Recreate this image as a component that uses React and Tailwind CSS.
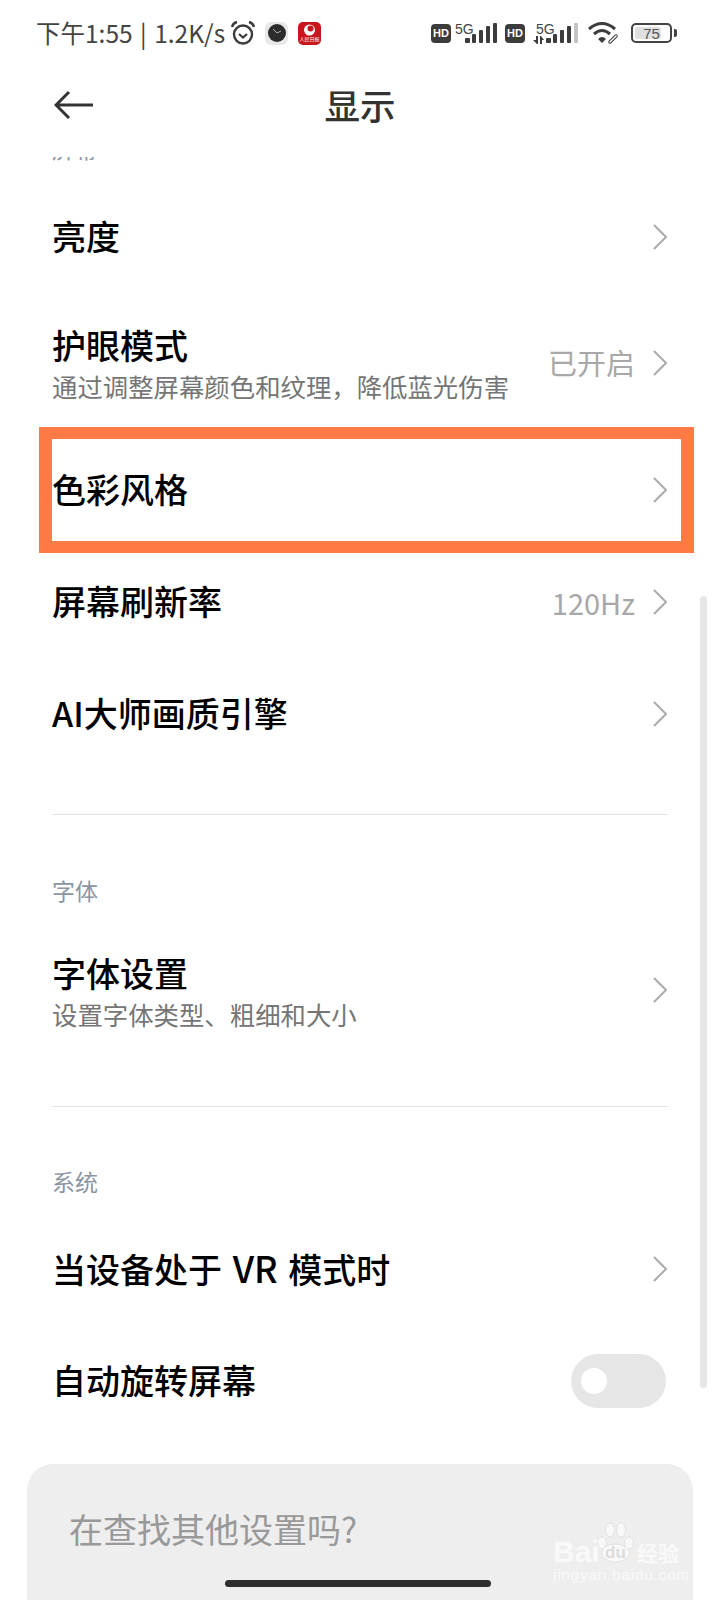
import React from "react";

const CJK = '"Noto Sans CJK SC", sans-serif';

const Chevron = () => (
  <svg width="16" height="28" viewBox="0 0 16 28" fill="none" className="shrink-0">
    <path d="M2 2 L14 14 L2 26" stroke="#ababab" strokeWidth="2" strokeLinejoin="round" />
  </svg>
);

const Bars = ({ lastLight }) => (
  <svg width="32" height="21" viewBox="0 0 32 21" fill="#3c3c3c">
    <rect x="0" y="15" width="5" height="5" rx="1" />
    <rect x="7" y="11" width="4" height="9" rx="1" />
    <rect x="14" y="7" width="4" height="13" rx="1" />
    <rect x="21" y="3" width="4" height="17" rx="1" />
    <rect x="28" y="0" width="4" height="20" rx="1" fill={lastLight ? "#c4c4c4" : "#3c3c3c"} />
  </svg>
);

const HdBadge = () => (
  <div className="w-[20px] h-[19px] rounded-[4px] bg-[#3c3c3c] flex items-center justify-center text-white text-[11px] font-bold leading-none font-['Liberation_Sans']">
    HD
  </div>
);

const StatusBar = () => (
  <div className="h-[66px] flex items-center pl-[36px] pr-[43px] text-[#444444]">
    <span className="text-[24.5px] leading-none whitespace-nowrap [word-spacing:2px]">下午1:55 | 1.2K/s</span>
    {/* alarm */}
    <svg width="26" height="26" viewBox="0 0 26 26" fill="none" stroke="#3c3c3c" className="ml-[5px]">
      <circle cx="13" cy="14.5" r="9" strokeWidth="2.4" />
      <path d="M9 14 L13 17.5 L17 14" strokeWidth="2.2" />
      <path d="M2 7 Q3 3 7 2" strokeWidth="2.4" />
      <path d="M24 7 Q23 3 19 2" strokeWidth="2.4" />
    </svg>
    {/* clock app */}
    <div className="ml-[9px] w-[23px] h-[23px] rounded-[6px] bg-[#e8e8e8] flex items-center justify-center">
      <svg width="18" height="18" viewBox="0 0 18 18">
        <circle cx="9" cy="9" r="9" fill="#2c2c2c" />
        <path d="M9 9 L5 5 M9 9 L13 7" stroke="#cfcfcf" strokeWidth="0.8" />
      </svg>
    </div>
    {/* news app */}
    <div className="ml-[10px] w-[23px] h-[23px] rounded-[5px] bg-[#c8161d] flex flex-col items-center justify-center overflow-hidden">
      <svg width="13" height="12" viewBox="0 0 13 12">
        <circle cx="6.5" cy="6" r="5.5" fill="#ffffff" />
        <circle cx="7.5" cy="4.5" r="3" fill="#c8161d" />
      </svg>
      <span className="text-[5px] leading-[6px] text-white whitespace-nowrap">人民日报</span>
    </div>

    <div className="ml-auto flex items-center">
      <HdBadge />
      <div className="relative w-[42px] h-[21px] ml-[4px]">
        <span className="absolute left-0 -top-[1px] text-[14px] leading-none font-['Liberation_Sans']">5G</span>
        <div className="absolute left-[10px] top-0">
          <Bars />
        </div>
      </div>
      <div className="ml-[8px]">
        <HdBadge />
      </div>
      <div className="relative w-[45px] h-[21px] ml-[8px]">
        <span className="absolute left-[3px] -top-[1px] text-[14px] leading-none font-['Liberation_Sans']">5G</span>
        <svg width="11" height="8" viewBox="0 0 11 8" className="absolute left-0 top-[13px]" fill="#3c3c3c">
          <path d="M3 0 L5 0 L5 8 L4 8 L0 4 L3 4 Z" />
          <path d="M7 0 L8 0 L11 4 L9 4 L9 8 L7 8 Z" />
        </svg>
        <div className="absolute left-[13px] top-0">
          <Bars lastLight />
        </div>
      </div>
      {/* wifi */}
      <svg width="34" height="24" viewBox="0 0 34 24" fill="none" className="ml-[9px]">
        <path d="M2 8 Q15 -3 28 8" stroke="#3c3c3c" strokeWidth="3" />
        <path d="M7 13 Q15 6 23 13" stroke="#3c3c3c" strokeWidth="3" />
        <path d="M11 18 L15 22 L19 18 Q15 14 11 18 Z" fill="#3c3c3c" />
        <path d="M23 21 L29 15" stroke="#3c3c3c" strokeWidth="3.5" strokeLinecap="round" />
        <path d="M23 21 L29 15" stroke="#ffffff" strokeWidth="1.5" strokeLinecap="round" />
      </svg>
      {/* battery */}
      <div className="ml-[10px] relative w-[41px] h-[20px] rounded-[5px] border-2 border-[#444444] flex items-center">
        <div className="absolute left-[2px] top-[2px] bottom-[2px] w-[26px] bg-[#e0e0e0] rounded-[2px]" />
        <span className="relative w-full text-center text-[15px] leading-none font-['Liberation_Sans'] text-[#555555]">75</span>
      </div>
      <div className="ml-[2px] w-[3px] h-[8px] rounded-r-[2px] bg-[#444444]" />
    </div>
  </div>
);

const Row = ({ title, sub, value, height = "h-[112px]", rowClass = "", highlight }) => (
  <div className={`relative flex items-center justify-between pl-[52px] pr-[52px] ${height} ${rowClass}`}>
    <div className={sub ? "pt-[3px]" : "pb-[2px]"}>
      <div className="text-[34px] leading-[42px] font-medium text-black whitespace-nowrap [word-spacing:3px]">{title}</div>
      {sub && <div className="mt-[2px] text-[25.4px] leading-[36px] text-[#757575] whitespace-nowrap">{sub}</div>}
    </div>
    <div className="flex items-center gap-[17px]">
      {value && <span className="text-[29px] leading-none text-[#a8a8a8]">{value}</span>}
      <Chevron />
    </div>
    {highlight && (
      <div className="absolute left-[39px] -top-[7px] w-[655px] h-[126px] border-x-[13px] border-y-[12px] border-[#ff7a45]" />
    )}
  </div>
);

const SectionLabel = ({ children, className }) => (
  <div className={`px-[52px] text-[23px] leading-[30px] text-[#8c95a3] ${className}`}>{children}</div>
);

const Divider = ({ className }) => <div className={`mx-[52px] h-px bg-[#e3e3e3] ${className}`} />;

const App = () => (
  <div className="relative w-[720px] h-[1600px] overflow-hidden bg-white" style={{ fontFamily: CJK }}>
    <StatusBar />

    {/* header */}
    <div className="relative h-[91px] pt-[12px]">
      <svg width="40" height="30" viewBox="0 0 40 30" fill="none" className="absolute left-[54px] top-[24px]">
        <path d="M39 15 L2 15 M15 2 L2 15 L15 28" stroke="#333333" strokeWidth="3" />
      </svg>
      <div className="text-center text-[35.5px] leading-[54px] font-medium text-[#333333]">显示</div>
    </div>

    {/* list */}
    <div className="h-[7px] overflow-hidden mb-[17px]">
      <SectionLabel className="-mt-[24px]">屏幕</SectionLabel>
    </div>
    <Row title="亮度" />
    <Row title="护眼模式" sub="通过调整屏幕颜色和纹理，降低蓝光伤害" value="已开启" height="h-[141px]" rowClass="pb-[2px]" />
    <Row title="色彩风格" highlight />
    <Row title="屏幕刷新率" value="120Hz" />
    <Row title="AI大师画质引擎" />
    <Divider className="mt-[44px]" />

    <SectionLabel className="mt-[60px]">字体</SectionLabel>
    <div className="mt-[14px]">
      <Row title="字体设置" sub="设置字体类型、粗细和大小" height="h-[142px]" />
    </div>
    <Divider className="mt-[45px]" />

    <SectionLabel className="mt-[59px]">系统</SectionLabel>
    <div className="mt-[17px]">
      <Row
        title={
          <>
            当设备处于 <span className="text-[36px]">VR</span> 模式时
          </>
        }
      />
    </div>
    <div className="relative flex items-center justify-between pl-[52px] pr-[54px] h-[112px]">
      <div className="pb-[2px] text-[34px] leading-[42px] font-medium text-black">自动旋转屏幕</div>
      <div className="w-[95px] h-[54px] rounded-full bg-[#e6e6e6] flex items-center pl-[10px]">
        <div className="w-[26px] h-[26px] rounded-full bg-white" />
      </div>
    </div>

    {/* bottom card */}
    <div className="mt-[27px] ml-[27px] w-[666px] h-[200px] rounded-t-[26px] bg-[#eeeeee] pl-[42px] pt-[41px]">
      <div className="text-[34px] leading-[48px] text-[#999999] whitespace-nowrap">在查找其他设置吗?</div>
    </div>

    {/* scrollbar */}
    <div className="absolute left-[700px] top-[596px] w-[7px] h-[792px] rounded-full bg-[#e6e6e6]" />

    {/* home indicator */}
    <div className="absolute left-[225px] top-[1580px] w-[266px] h-[7px] rounded-full bg-[#2e2e2e]" />

    {/* watermark */}
    <div className="absolute left-[553px] top-[1522px] w-[130px] h-[62px]">
      <span className="absolute left-0 top-[12px] text-[30px] leading-[36px] font-bold font-['Liberation_Sans'] text-[#f9f9f9]">Bai</span>
      <svg width="37" height="41" viewBox="0 0 37 41" className="absolute left-[44px] top-0" fill="#f8f8f8" stroke="#e2e2e2">
        <ellipse cx="5" cy="21" rx="4.5" ry="6" />
        <ellipse cx="13" cy="8" rx="4.5" ry="7" />
        <ellipse cx="24" cy="8" rx="4.5" ry="7" />
        <ellipse cx="32" cy="21" rx="4.5" ry="6" />
        <ellipse cx="18.5" cy="31" rx="14" ry="9" />
      </svg>
      <span className="absolute left-[52px] top-[22px] text-[17px] leading-[18px] font-bold font-['Liberation_Sans'] text-[#dcdcdc]">du</span>
      <span className="absolute left-[84px] top-[16px] text-[21px] leading-[28px] font-bold text-[#f9f9f9]">经验</span>
      <span className="absolute left-0 top-[44px] text-[15.5px] leading-[18px] tracking-[0.7px] text-[#f9f9f9] font-['Liberation_Sans'] whitespace-nowrap">jingyan.baidu.com</span>
    </div>
  </div>
);

export default App;
